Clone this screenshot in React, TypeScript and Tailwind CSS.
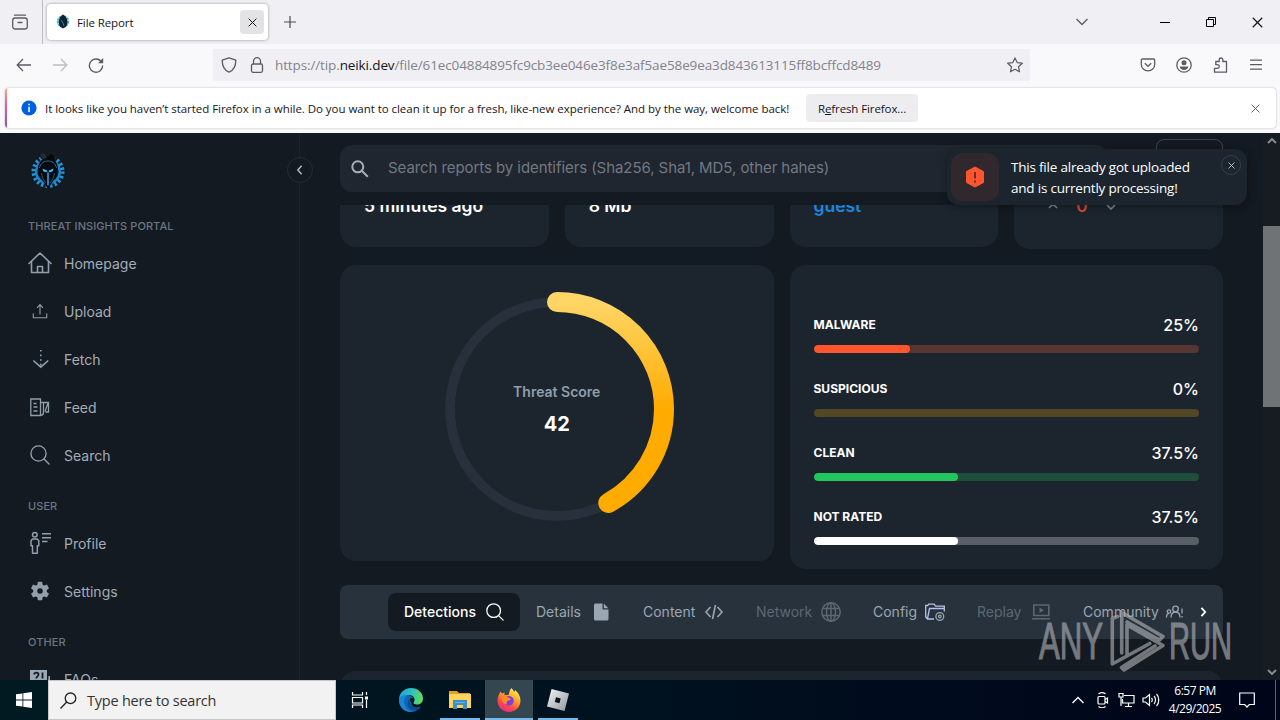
import type { ReactNode } from "react";
import clsx from "clsx";

interface IconProps {
  className?: string;
}

interface NavItem {
  label: string;
  icon: ReactNode;
}

interface Rating {
  label: string;
  value: number;
  track: string;
  bar: string;
}

interface ReportTab {
  label: string;
  width: string;
  icon: ReactNode;
  state?: "active" | "disabled";
}

const SearchIcon = ({ className }: IconProps) => (
  <svg className={className} viewBox="0 0 20 20" fill="none" stroke="currentColor" strokeWidth="1.4" strokeLinecap="round">
    <circle cx="8.5" cy="8.5" r="7.6" />
    <path d="M14 14l5 5" />
  </svg>
);

const Cross = ({ className }: IconProps) => (
  <svg className={className} viewBox="0 0 10 10" fill="none" stroke="currentColor" strokeWidth="1.1">
    <path d="M0.7 0.7l8.6 8.6M9.3 0.7l-8.6 8.6" />
  </svg>
);

const NeikiLogo = ({ className }: IconProps) => (
  <svg className={className} viewBox="0 0 36 38">
    <circle cx="18" cy="19.5" r="14.2" fill="none" stroke="#1d97e0" strokeWidth="4.6" strokeDasharray="2.3 2.16" />
    <circle cx="18" cy="19.5" r="11.8" fill="none" stroke="#1a86cc" strokeWidth="2.4" />
    <path d="M8 0h20l-3 7H11z" fill="#141a21" />
    <path d="M18 4c-6 2-10 7-10 13 0 5 2 8 4.500 11.500L18 37l5.500-8.500C26 25 28 22 28 17c0-6-4-11-10-13z" fill="#05080c" />
    <path d="M19 8l1-6 4 2 2 8z" fill="#05080c" />
    <path d="M10 3l4 4 3-1-3-5z" fill="#2a2e33" />
    <path d="M9.500 16c1-5 5-7 8.500-7s7.500 2 8.500 7" fill="none" stroke="#2b6f92" strokeWidth="1" />
    <path d="M12.500 16.500l5 2.300-1.200 1.800-3-1.300zM23.500 16.500l-5 2.300 1.200 1.800 3-1.300z" fill="#38c2fa" />
    <path d="M17.200 20.500h1.600v12l-.8 1.500-.8-1.500z" fill="#2aa6ea" />
    <path d="M11.500 21c.500 4 2 7 4.500 10M24.500 21c-.500 4-2 7-4.500 10" fill="none" stroke="#1f5f86" strokeWidth="1" />
  </svg>
);

const mainNav: NavItem[] = [
  {
    label: "Homepage",
    icon: (
      <svg viewBox="0 0 24 24" className="size-6" fill="none" stroke="currentColor" strokeWidth="1.6" strokeLinejoin="round" strokeLinecap="round">
        <path d="M1 12.5L12 2l11 10.500" />
        <path d="M3.5 10.5V21.500h17V10.5" />
        <path d="M9.5 21.5v-6h5v6" />
      </svg>
    ),
  },
  {
    label: "Upload",
    icon: (
      <svg viewBox="0 0 24 24" className="size-6" fill="none" stroke="currentColor" strokeWidth="1.1">
        <path d="M5.3 14.5v4.2h13.4v-4.2M12 15.5V5.8M9 8.8l3-3.2 3 3.2" />
      </svg>
    ),
  },
  {
    label: "Fetch",
    icon: (
      <svg viewBox="0 0 24 24" className="size-6" fill="none" stroke="currentColor" strokeWidth="1.6">
        <path d="M5.300 13.500l7.500 6.700 7.500-6.700" />
        <path d="M12.800 3v17" strokeDasharray="1.6 3" />
      </svg>
    ),
  },
  {
    label: "Feed",
    icon: (
      <svg viewBox="0 0 24 24" className="size-6" fill="none" stroke="currentColor" strokeWidth="1.3">
        <path d="M2.800 4h9.700v16.500H2.800zM12.500 20.500c2 0 3-1 3-3.200V8M12.500 7.500h8v9.500h-3M20 8l-3 8.500M5.500 8.500h3M5.500 12h4M5.500 16h4" />
      </svg>
    ),
  },
  { label: "Search", icon: <SearchIcon className="ml-[2px] size-5" /> },
];

const userNav: NavItem[] = [
  {
    label: "Profile",
    icon: (
      <svg viewBox="0 0 24 24" className="size-6" fill="none" stroke="currentColor" strokeWidth="1.5">
        <circle cx="6.800" cy="3.700" r="2.300" />
        <path d="M4.500 8h4.600l1.700 1.700v5.100H9.300v7.500H4.500v-7.500H3V9.700z" strokeLinejoin="round" />
        <path d="M14 2.800h9M14 6.700h9M14 10.500h5.500" />
      </svg>
    ),
  },
  {
    label: "Settings",
    icon: (
      <svg viewBox="0 0 24 24" className="ml-px size-[22px]" fill="currentColor">
        <path d="M19.430 12.980c.040-.320.070-.640.070-.980s-.030-.660-.070-.980l2.110-1.650c.190-.150.240-.420.120-.640l-2-3.460c-.120-.220-.390-.300-.610-.220l-2.490 1c-.520-.400-1.080-.730-1.690-.980l-.380-2.650A.488.488 0 0014 2h-4c-.250 0-.460.180-.490.420l-.380 2.650c-.610.250-1.170.590-1.690.980l-2.490-1c-.230-.090-.490 0-.610.220l-2 3.460c-.130.220-.070.490.120.640l2.110 1.650c-.040.320-.070.650-.070.980s.030.660.070.980l-2.110 1.650c-.190.150-.240.420-.120.640l2 3.460c.120.220.390.300.610.220l2.490-1c.520.400 1.080.730 1.690.980l.380 2.650c.030.240.240.420.490.420h4c.250 0 .460-.180.490-.420l.380-2.650c.610-.250 1.170-.590 1.690-.980l2.490 1c.230.090.490 0 .610-.220l2-3.460c.120-.220.070-.490-.120-.640l-2.110-1.650zM12 15a3 3 0 110-6 3 3 0 010 6z" />
      </svg>
    ),
  },
];

const otherNav: NavItem[] = [
  {
    label: "FAQs",
    icon: (
      <svg viewBox="0 0 24 24" className="size-6">
        <path d="M2 3h17v14H8l-4 4v-4H2z" fill="#9aa7b5" />
        <path d="M20.500 9h1.500v9h-2z" fill="#9aa7b5" />
        <path d="M6 7.500c.500-2.500 4.500-2.500 4.500 0 0 2-2.200 1.800-2.200 4M14.500 5.500v6" stroke="#141a21" strokeWidth="1.800" fill="none" />
      </svg>
    ),
  },
];

const ratings: Rating[] = [
  { label: "MALWARE", value: 25, track: "bg-[#573532]", bar: "bg-[#ff5630]" },
  { label: "SUSPICIOUS", value: 0, track: "bg-[#524724]", bar: "bg-[#ffab00]" },
  { label: "CLEAN", value: 37.5, track: "bg-[#1f4f3a]", bar: "bg-[#22c55e]" },
  { label: "NOT RATED", value: 37.5, track: "bg-[#595f65]", bar: "bg-white" },
];

const reportTabs: ReportTab[] = [
  { label: "Detections", width: "w-[132px]", state: "active", icon: <SearchIcon className="size-[18px]" /> },
  {
    label: "Details",
    width: "w-[107px]",
    icon: (
      <svg viewBox="0 0 20 20" className="size-5" fill="currentColor">
        <path d="M4.500 1.500h7v5.200c0 .500.300.800.800.800h5.200v9.500c0 .800-.700 1.500-1.500 1.500H4.500c-.800 0-1.500-.700-1.500-1.500V3c0-.800.700-1.500 1.500-1.500zM12.800 1.500l4.500 4.700h-4.500z" />
      </svg>
    ),
  },
  {
    label: "Content",
    width: "w-[113px]",
    icon: (
      <svg viewBox="0 0 20 20" className="size-5" fill="none" stroke="currentColor" strokeWidth="1.600">
        <path d="M6.500 5L2 10l4.500 5M13.500 5l4.500 5-4.500 5M11.500 3l-3 14" />
      </svg>
    ),
  },
  {
    label: "Network",
    width: "w-[117px]",
    state: "disabled",
    icon: (
      <svg viewBox="0 0 20 20" className="size-5" fill="none" stroke="currentColor" strokeWidth="1.500">
        <circle cx="10" cy="10" r="9.200" />
        <ellipse cx="10" cy="10" rx="4.500" ry="9.200" />
        <path d="M10 1v18M1.500 6.500h17M1.500 13.500h17" />
      </svg>
    ),
  },
  {
    label: "Config",
    width: "w-[104px]",
    icon: (
      <svg viewBox="0 0 20 20" className="size-5" fill="none" strokeWidth="1.300">
        <path d="M9 17H2.500L.700 15V3.500h2l1-1.300h5.500l1.300 2h8.800v2.300H4.500L2.500 16.500M19.300 6.500v3" stroke="#b6c0e6" />
        <circle cx="14.800" cy="14.500" r="3.900" stroke="currentColor" />
        <circle cx="14.800" cy="14.500" r="1.300" stroke="currentColor" />
      </svg>
    ),
  },
  {
    label: "Replay",
    width: "w-[106px]",
    state: "disabled",
    icon: (
      <svg viewBox="0 0 20 20" className="size-5" fill="none" stroke="currentColor" strokeWidth="1.600">
        <path d="M2.800 3h15v10.500h-15zM1 16.800h18" />
        <path d="M8.500 5.500l4.500 2.800-4.500 2.800z" fill="currentColor" stroke="none" />
      </svg>
    ),
  },
  {
    label: "Community",
    width: "w-[133px]",
    icon: (
      <svg viewBox="0 0 20 20" className="size-5" fill="none" stroke="currentColor" strokeWidth="1.300">
        <circle cx="11.500" cy="7" r="2.800" />
        <path d="M7 15.500c0-3.500 2-5.500 4.500-5.500s4.500 2 4.500 5.500" />
        <circle cx="5" cy="9.500" r="1.700" />
        <path d="M2.500 15.500c0-2.500 1-3.800 2.500-3.800M18 6.500v5M18 14v1.500" />
      </svg>
    ),
  },
];

function BrowserChrome() {
  return (
    <div className="flex h-[133px] shrink-0 flex-col bg-[#f9f9fb] font-['Open_Sans',sans-serif] text-[12px] text-[#15141a]">
      {/* Tab strip */}
      <div className="flex h-11 shrink-0 items-center bg-[#f0f0f4]">
        <div className="flex h-11 w-[43px] items-center border-r border-[#bdbcc2] pl-3">
          <svg viewBox="0 0 16 16" className="size-4" fill="none" stroke="#5b5b66" strokeWidth="1.300">
            <rect x="0.700" y="4" width="14.600" height="11" rx="2.500" />
            <path d="M2.500 1.200h11M6 8.500h4" strokeLinecap="round" />
          </svg>
        </div>
        <div className="ml-1 flex h-9 w-[221px] items-center rounded bg-white pr-1 pl-2 shadow-[0_0_3px_rgba(0,0,0,0.4)]">
          <svg viewBox="0 0 16 16" className="size-4">
            <circle cx="8" cy="7.500" r="5" fill="none" stroke="#49b5d3" strokeWidth="2.500" strokeDasharray="2 .7" />
            <path d="M8 .500c-4 2-5.500 8-3 12l3 2 3-2c3-4 1-10-3-12z" fill="#10222d" />
            <path d="M6 6l2 3 1 3" stroke="#2980a6" fill="none" />
          </svg>
          <span className="ml-[6px] pt-px text-[11.500px] tracking-[-0.1px]">File Report</span>
          <button className="ml-auto flex size-6 items-center justify-center rounded bg-[#e3e3e6]">
            <Cross className="size-[9px]" />
          </button>
        </div>
        <svg viewBox="0 0 12 12" className="ml-4 size-3" fill="none" stroke="#4b4b55" strokeWidth="1.200">
          <path d="M6 0v12M0 6h12" />
        </svg>
        <div className="ml-auto flex items-center pr-[17px]">
          <svg viewBox="0 0 12 8" className="mr-[72px] h-2 w-3" fill="none" stroke="#5b5b66" strokeWidth="1.300">
            <path d="M.500 1l5.500 5.500L11.500 1" />
          </svg>
          <span className="mr-9 h-px w-[10px] bg-black" />
          <svg viewBox="0 0 10 10" className="mr-9 size-[10px]" fill="none" stroke="black">
            <path d="M.500 2.500h7v7h-7zM2.500 2.500v-2h7v7h-2" />
          </svg>
          <Cross className="size-[11px]" />
        </div>
      </div>

      {/* Navigation toolbar */}
      <div className="flex h-[44px] shrink-0 items-center pb-[3px] text-[#5b5b66]">
        <svg viewBox="0 0 16 16" className="ml-4 size-4" fill="none" stroke="currentColor" strokeWidth="1.300">
          <path d="M15 8H1.500M7 2L1.200 8 7 14" />
        </svg>
        <svg viewBox="0 0 16 16" className="ml-5 size-4" fill="none" stroke="#bcbcc2" strokeWidth="1.300">
          <path d="M1 8h13.500M9 2l5.800 6L9 14" />
        </svg>
        <svg viewBox="0 0 16 16" className="ml-5 size-4" fill="none" stroke="currentColor" strokeWidth="1.400">
          <path d="M13.500 5A6.600 6.600 0 1014.600 8.500" />
          <path d="M15.200 1v5.200H10z" fill="currentColor" stroke="none" />
        </svg>
        <div className="ml-[109px] flex h-8 w-[817px] items-center bg-[#f0f0f4] pr-[7px] pl-2">
          <svg viewBox="0 0 16 16" className="size-4" fill="none" stroke="currentColor" strokeWidth="1.300" strokeLinejoin="round">
            <path d="M8 .800l6.800 2.400c0 6-2 10-6.800 12-4.800-2-6.800-6-6.800-12z" />
          </svg>
          <svg viewBox="0 0 16 16" className="ml-3 size-4" fill="none" stroke="currentColor" strokeWidth="1.300">
            <rect x="2.500" y="7" width="11" height="8.300" rx="1.500" />
            <path d="M4.500 7V4.200a3.500 3.500 0 017 0V7" />
          </svg>
          <span className="ml-[10px] pt-px text-[13.500px] tracking-[-0.12px] whitespace-nowrap text-[#84838b]">
            https://tip.<span className="text-[#15141a]">neiki.dev</span>
            /file/61ec04884895fc9cb3ee046e3f8e3af5ae58e9ea3d843613115ff8bcffcd8489
          </span>
          <svg viewBox="0 0 16 16" className="ml-auto size-4" fill="none" stroke="currentColor" strokeWidth="1.200" strokeLinejoin="round">
            <path d="M8 .900l2.200 4.700 5.100.600-3.800 3.500 1 5.100L8 12.300l-4.500 2.500 1-5.100L.700 6.200l5.100-.600z" />
          </svg>
        </div>
        <div className="ml-auto flex items-center gap-5 pr-4">
          <svg viewBox="0 0 16 16" className="size-4" fill="none" stroke="currentColor" strokeWidth="1.300">
            <path d="M2.500 2h11c.700 0 1.200.500 1.200 1.200v4a6.700 6.700 0 01-13.400 0v-4C1.300 2.500 1.800 2 2.500 2z" />
            <path d="M4.800 6.300L8 9.300l3.200-3" />
          </svg>
          <svg viewBox="0 0 16 16" className="size-4">
            <circle cx="8" cy="8" r="7.200" fill="none" stroke="currentColor" strokeWidth="1.300" />
            <circle cx="8" cy="5.800" r="2.500" fill="currentColor" />
            <path d="M3.800 9.500h8.400c0 2-1.900 3.500-4.200 3.500s-4.200-1.500-4.200-3.500z" fill="currentColor" />
          </svg>
          <svg viewBox="0 0 16 16" className="size-4" fill="none" stroke="currentColor" strokeWidth="1.300">
            <path d="M2.500 15.200h12V4.500h-3.700V2.800a1.800 1.800 0 00-3.600 0v1.700H3.800v3.200h1.700a1.700 1.700 0 010 3.600H2.500z" strokeLinejoin="round" />
          </svg>
          <svg viewBox="0 0 16 16" className="size-4" fill="none" stroke="currentColor" strokeWidth="1.300">
            <path d="M2 3.200h12M2 7.700h12M2 12.200h12" />
          </svg>
        </div>
      </div>

      {/* Refresh notification */}
      <div className="mr-1 ml-[5px] flex h-10 items-center overflow-hidden rounded bg-white pr-4 shadow-[0_0_2px_rgba(0,0,0,0.3)]">
        <span className="h-full w-[2px] bg-linear-to-b from-[#ffa06a] via-[#e0559a] to-[#8651c4]" />
        <svg viewBox="0 0 16 16" className="ml-[14px] size-4">
          <circle cx="8" cy="8" r="7.600" fill="#0060df" />
          <path d="M7.300 3.800h1.500v1.500H7.300zM7.300 6.800h1.500v5.200H7.300z" fill="white" />
        </svg>
        <span className="ml-2 w-[761px] pt-[2px] text-[11.500px] tracking-[-0.04px] whitespace-nowrap">
          It looks like you haven’t started Firefox in a while. Do you want to clean it up for a fresh, like-new experience? And by the
          way, welcome back!
        </span>
        <button className="h-7 w-[112px] rounded bg-[#ededf0] pt-[2px] text-[11.500px] tracking-[-0.1px]">
          R<span className="underline">e</span>fresh Firefox...
        </button>
        <Cross className="ml-auto size-[9px] text-[#5b5b66]" />
      </div>
    </div>
  );
}

const NavGroup = ({ title, items }: { title: string; items: NavItem[] }) => (
  <div>
    <h2 className="h-10 pt-[17px] text-[11px] leading-5 font-medium tracking-[0.07px] whitespace-nowrap text-[#697683]">{title}</h2>
    {items.map((item) => (
      <a key={item.label} className="flex h-12 items-center gap-3 text-[14px] text-[#a3adb8]">
        <span className="flex size-6 items-center text-[#919eab]">{item.icon}</span>
        <span className="pt-px">{item.label}</span>
      </a>
    ))}
  </div>
);

function Sidebar() {
  return (
    <aside className="relative h-full w-[300px] shrink-0 border-r border-[#1c232b] px-7">
      <div className="h-[66px] pt-[19px] pl-[2px]">
        <NeikiLogo className="h-[38px] w-9" />
      </div>
      <NavGroup title="THREAT INSIGHTS PORTAL" items={mainNav} />
      <NavGroup title="USER" items={userNav} />
      <NavGroup title="OTHER" items={otherNav} />
      <button className="absolute top-6 -right-[14px] z-10 flex size-[26px] items-center justify-center rounded-full border border-[#262e37] bg-[#141a21]">
        <svg viewBox="0 0 8 12" className="mr-px h-[10px] w-[7px]" fill="none" stroke="#b4bdc6" strokeWidth="1.700">
          <path d="M6.500 1L2 6l4.500 5" />
        </svg>
      </button>
    </aside>
  );
}

function ScoreGauge({ score }: { score: number }) {
  const radius = 107;
  const length = 2 * Math.PI * radius;

  return (
    <div className="relative h-[296px] rounded-2xl bg-[#1c252e]">
      <svg viewBox="0 0 434 296" className="h-[296px] w-[434px]" fill="none">
        <defs>
          {/* The ring is rotated, so the gradient runs right to left here */}
          <linearGradient id="scoreFill" gradientUnits="userSpaceOnUse" x1="324" y1="0" x2="217" y2="0">
            <stop offset="0" stopColor="#ffd666" />
            <stop offset="1" stopColor="#ffab00" />
          </linearGradient>
        </defs>
        <circle cx="217" cy="144" r={radius} stroke="#28303c" strokeWidth="9.700" />
        <circle
          cx="217"
          cy="144"
          r={radius}
          stroke="url(#scoreFill)"
          strokeWidth="20"
          strokeLinecap="round"
          strokeDasharray={`${(length * score) / 100} ${length}`}
          transform="rotate(-90 217 144)"
        />
      </svg>
      <div className="absolute inset-x-0 top-[117px] flex flex-col items-center">
        <span className="text-[14px] leading-5 font-semibold text-[#919eab]">Threat Score</span>
        <span className="mt-2 text-[20px] leading-7 font-bold text-white">{score}</span>
      </div>
    </div>
  );
}

const RatingRow = ({ rating }: { rating: Rating }) => (
  <div>
    <div className="flex h-6 items-center justify-between text-white">
      <span className="text-[12px] font-bold">{rating.label}</span>
      <span className="text-[16px] font-medium">{rating.value}%</span>
    </div>
    <div className={clsx("mt-2 h-2 overflow-hidden rounded-full", rating.track)}>
      <div className={clsx("h-2 rounded-full", rating.bar)} style={{ width: `${rating.value}%` }} />
    </div>
  </div>
);

function Toast() {
  return (
    <div className="absolute top-4 left-[947px] z-20 flex h-14 w-[300px] items-center rounded-xl bg-[#1c252e] pl-1 shadow-[0_2px_10px_rgba(0,0,0,0.35)]">
      <div className="flex size-12 items-center justify-center rounded-xl bg-[#30282d]">
        <svg viewBox="0 0 20 22" className="h-[22px] w-5">
          <path d="M10 1l8.500 4.500v11L10 21l-8.500-4.500v-11z" fill="#ff5630" stroke="#ff5630" strokeLinejoin="round" />
          <path d="M10 6v6.500M10 14.500v2" stroke="#4a2526" strokeWidth="1.600" />
        </svg>
      </div>
      <p className="ml-3 pt-[2px] font-['Open_Sans',sans-serif] text-[13.500px] leading-[21px] tracking-[-0.21px] whitespace-nowrap text-white">
        This file already got uploaded
        <br />
        and is currently processing!
      </p>
      <button className="absolute top-[6px] right-[6px] flex size-5 items-center justify-center rounded-full border border-[#36404a]">
        <Cross className="size-[7px] text-[#dfe3e8]" />
      </button>
    </div>
  );
}

function ReportPage() {
  return (
    <main className="h-full w-[963px] shrink-0 px-10">
      <header className="flex h-[72px] justify-between pt-[6px]">
        <div className="mt-[6px] flex h-[47px] w-[768px] items-center rounded-xl bg-[#20262f] pl-[11px]">
          <svg viewBox="0 0 18 18" className="size-[18px]" fill="none" stroke="#a5afb9" strokeWidth="2">
            <circle cx="6.800" cy="6.800" r="5.500" />
            <path d="M10.800 10.800l6 6" />
          </svg>
          <span className="ml-[19px] text-[15px] tracking-[-0.07px] text-[#717983]">
            Search reports by identifiers (Sha256, Sha1, MD5, other hahes)
          </span>
        </div>
        <div className="h-10 w-[67px] rounded-lg border border-[#3a444e]" />
      </header>

      <div className="h-[475px] overflow-hidden">
        <div className="-mt-[60px] grid grid-cols-4 items-start gap-4 text-[17.500px] font-semibold text-white">
          <div className="h-[102px] rounded-2xl bg-[#1c252e] px-6 pt-12">5 minutes ago</div>
          <div className="h-[102px] rounded-2xl bg-[#1c252e] px-6 pt-12">8 Mb</div>
          <div className="h-[102px] rounded-2xl bg-[#1c252e] px-6 pt-12 text-[#1f86dd]">guest</div>
          <div className="flex h-[104px] items-start gap-[18px] rounded-2xl bg-[#1c252e] pt-12 pl-[34px]">
            <svg viewBox="0 0 10 6" className="mt-[10px] h-[6px] w-[10px]" fill="none" stroke="#7b8690" strokeWidth="1.700">
              <path d="M1 5l4-4 4 4" />
            </svg>
            <span className="font-medium text-[#e64c3c]">0</span>
            <svg viewBox="0 0 10 6" className="mt-[11px] h-[6px] w-[10px]" fill="none" stroke="#7b8690" strokeWidth="1.700">
              <path d="M1 1l4 4 4-4" />
            </svg>
          </div>
        </div>

        <div className="mt-4 grid grid-cols-2 items-start gap-4">
          <ScoreGauge score={42} />
          <div className="flex h-[304px] flex-col gap-6 rounded-2xl bg-[#1c252e] px-6 pt-12">
            {ratings.map((rating) => (
              <RatingRow key={rating.label} rating={rating} />
            ))}
          </div>
        </div>

        <div className="mt-4 flex h-[54px] items-center rounded-lg bg-[#28323d] pl-12">
          {reportTabs.map((tab) => (
            <div
              key={tab.label}
              className={clsx(
                "flex h-[38px] shrink-0 items-center justify-between rounded-lg px-4 text-[14px]",
                tab.width,
                tab.state === "active" && "bg-[#141a21] font-medium text-white",
                tab.state === "disabled" && "text-[#5c6772]",
                !tab.state && "text-[#9aa6b2]",
              )}
            >
              <span className="pb-px">{tab.label}</span>
              {tab.icon}
            </div>
          ))}
          <svg viewBox="0 0 8 12" className="h-[10px] w-[7px] shrink-0" fill="none" stroke="white" strokeWidth="2.200">
            <path d="M1.500 1L6 6l-4.500 5" />
          </svg>
        </div>

        <div className="mt-8 h-10 rounded-2xl bg-[#1c252e]" />
      </div>
    </main>
  );
}

const Scrollbar = () => (
  <div className="flex h-full w-[17px] shrink-0 flex-col items-center bg-[#171c23] text-[#858a8f]">
    <svg viewBox="0 0 10 6" className="mt-[5px] h-[6px] w-[10px]" fill="none" stroke="currentColor" strokeWidth="2">
      <path d="M1 5l4-4 4 4" />
    </svg>
    <div className="mt-[82px] h-[181px] w-full bg-[#707375]" />
    <svg viewBox="0 0 10 6" className="mt-auto mb-[5px] h-[6px] w-[10px]" fill="none" stroke="currentColor" strokeWidth="2">
      <path d="M1 1l4 4 4-4" />
    </svg>
  </div>
);

const Watermark = () => (
  <svg viewBox="0 0 196 66" className="absolute top-[607px] left-[1037px] z-30 h-[66px] w-[196px] opacity-60" fill="#b4b7bb">
    <g fontFamily="'Liberation Sans Narrow','Liberation Sans',sans-serif" fontSize="52" stroke="#b4b7bb" strokeWidth="1.200">
      <text x="2" y="52" textLength="64" lengthAdjust="spacingAndGlyphs">
        ANY
      </text>
      <text x="132" y="52" textLength="63" lengthAdjust="spacingAndGlyphs">
        RUN
      </text>
    </g>
    <path
      d="M80.500 9.500l-5.200 2V57l37.500-20.500M84.700 46V5.500L126 29.500l-3.500 3.500L90 15M90 48V18M90 18l36 20.500L87 63l-2.500-2.500L118 39"
      fill="none"
      stroke="#b4b7bb"
      strokeWidth="3.600"
      strokeLinecap="round"
      strokeLinejoin="round"
    />
  </svg>
);

function Taskbar() {
  return (
    <footer className="flex h-10 shrink-0 items-center bg-linear-to-r from-[#001a22] via-[#00111f] to-[#000519] font-['Open_Sans',sans-serif] text-white">
      <div className="flex w-12 justify-center">
        <svg viewBox="0 0 16 16" className="size-4" fill="white">
          <path d="M0 2.300l6.500-.900v6.200H0zM7.300 1.300L16 0v7.600H7.300zM0 8.400h6.500v6.200L0 13.700zM7.300 8.400H16V16l-8.700-1.200z" />
        </svg>
      </div>
      <div className="flex h-10 w-[288px] items-center border border-[#c8c8c8] bg-[#f2f2f2] pl-[11px] text-[#333]">
        <svg viewBox="0 0 17 17" className="size-[17px]" fill="none" stroke="#222" strokeWidth="1.300">
          <circle cx="10.500" cy="6.300" r="5.300" />
          <path d="M6.700 10L.500 16.500" />
        </svg>
        <span className="ml-[10px] pt-[2px] text-[14.500px] tracking-[-0.22px]">Type here to search</span>
      </div>

      <div className="flex w-12 justify-center">
        <svg viewBox="0 0 18 18" className="size-[18px]" fill="none" stroke="white" strokeWidth="1.200">
          <path d="M1.500 1v3h10V1M1.500 6.500h10v5.500h-10zM1.500 17v-3h10v3M15.500 1v3M15.500 9v8" />
          <path d="M14 5.500h3v3h-3z" fill="white" stroke="none" />
        </svg>
      </div>
      <div className="ml-[3px] flex w-12 justify-center">
        <svg viewBox="0 0 24 24" className="size-6">
          <defs>
            <linearGradient id="edgeTop" x1="0" x2="1" y1="0.300" y2="0.500">
              <stop offset="0" stopColor="#1ba4e4" />
              <stop offset="0.550" stopColor="#2fc4b4" />
              <stop offset="1" stopColor="#63dc5a" />
            </linearGradient>
          </defs>
          <path d="M0 12a12 12 0 0022 6.500c-2 1-4 1.200-6 .700-3-1-4-3-4-6l2-4L6 5z" fill="#0f68b4" />
          <path d="M0 12C0 5 5 0 12 0s12 5 12 10.500c0 4-3 6-6 6-2.500 0-4-1-3.500-2s1-1.500 1-3c0-2.500-2.500-4.500-6-4.500C5 7 1 9 0 12z" fill="url(#edgeTop)" />
          <path d="M0 12c1-4 5-5 8.500-5C6 8.500 4.500 12 5.500 16c1 4 4 7 7.500 8C5 24.500 0 19 0 12z" fill="#1b86d9" />
          <path d="M11.500 10c-1.500 3-.500 8 4 9.300 2.500.700 5 .200 6.500-.800-3 5-9 5-12 1.500-2.500-3-1.500-8 1.500-10z" fill="#0b4c91" />
          <path d="M11.800 9.800c2 0 3.500 1 3.300 3-.300 1-1 1.400-.600 2.400-1.500-.500-3-1-3.300-2.500-.200-1 0-2 .600-2.900z" fill="#03141e" />
        </svg>
      </div>
      <div className="relative ml-px flex h-10 w-12 items-center justify-center">
        <svg viewBox="0 0 22 20" className="h-5 w-[22px]">
          <path d="M0 1h8l2 2h11v4H0z" fill="#e59e1f" />
          <path d="M0 4h22v14H0z" fill="#ffd45e" />
          <path d="M4 10h14v9h-4v-4H8v4H4z" fill="#3a8fc9" />
          <path d="M6 12h10v1H6z" fill="#62b2e4" />
        </svg>
        <span className="absolute inset-x-1 bottom-0 h-[2px] bg-[#76b9ed]" />
      </div>
      <div className="relative ml-px flex h-10 w-12 items-center justify-center bg-[#344650]">
        <svg viewBox="0 0 24 24" className="size-6">
          <defs>
            <linearGradient id="fox" x1="0.800" x2="0.250" y1="0.050" y2="1">
              <stop offset="0" stopColor="#fff24a" />
              <stop offset="0.400" stopColor="#ff9a2b" />
              <stop offset="0.700" stopColor="#ff4a47" />
              <stop offset="1" stopColor="#e3268f" />
            </linearGradient>
          </defs>
          <path d="M14.500 0c1 1 2 3 3 4l.500-2c3 2.500 5.500 6 5.500 10.500C23.500 19 18.500 24 12 24S.500 19 .500 12.500C.500 9 2 6 3.500 3.500L5 5.500l2.500-1V7h4c1-3 1-5 3-7z" fill="url(#fox)" />
          <circle cx="12" cy="12.800" r="4.800" fill="#7b3fe0" />
          <path d="M4.500 8c3-1 5 0 6.500 1.500 2 .500 3 1 2.500 2-1 1-3 1-3.500 2-1 1.500 0 2.500-1 3-3-1-5-4-4.500-8.500z" fill="#ff8a22" />
        </svg>
        <span className="absolute inset-x-0 bottom-0 h-[2px] bg-[#76b9ed]" />
      </div>
      <div className="relative ml-px flex h-10 w-12 items-center justify-center">
        <svg viewBox="0 0 22 22" className="size-[22px]">
          <defs>
            <linearGradient id="tile" x1="0" x2="1" y1="0" y2="1">
              <stop offset="0" stopColor="#f5f6f7" />
              <stop offset="1" stopColor="#8e959c" />
            </linearGradient>
          </defs>
          <path d="M4.500 0L22 4.500 17.500 22 0 17.500z" fill="url(#tile)" />
          <path d="M9 8.300l4.700 1.200-1.200 4.700-4.700-1.200z" fill="#03141e" />
        </svg>
        <span className="absolute inset-x-1 bottom-0 h-[2px] bg-[#76b9ed]" />
      </div>

      <div className="ml-auto flex items-center">
        <svg viewBox="0 0 12 8" className="h-2 w-3" fill="none" stroke="white" strokeWidth="1.300">
          <path d="M.500 7L6 1.500 11.500 7" />
        </svg>
        <svg viewBox="0 0 16 16" className="ml-[10px] size-4" fill="none" stroke="white" strokeWidth="1.200">
          <rect x="4" y="4.500" width="7" height="7.500" rx="1" />
          <path d="M11 7.500l2.500-1.500v5L11 9.500M4.500 2c2-1.500 5-1.500 7 0M4.500 14.500c2 1.500 5 1.500 7 0" />
        </svg>
        <svg viewBox="0 0 17 16" className="ml-2 h-4 w-[17px]" fill="none" stroke="white" strokeWidth="1.200">
          <path d="M6 3.500h10V11H4.500V7M10.500 11v3M7 14.500h7M1 1.500h4V5H1zM3 5v9" />
        </svg>
        <svg viewBox="0 0 18 16" className="ml-[7px] h-4 w-[18px]" fill="none" stroke="white" strokeWidth="1.200">
          <path d="M1 6h2.500L7.500 2.500v11L3.500 10H1zM9.500 6c1 1 1 3 0 4M12 4c2 2 2 6 0 8M14.500 2c3 3 3 9 0 12" />
        </svg>
        <div className="ml-2 w-[54px] text-center text-[12px] leading-[18px] tracking-[-0.5px] whitespace-nowrap">
          <div>6:57 PM</div>
          <div>4/29/2025</div>
        </div>
        <svg viewBox="0 0 16 16" className="ml-[17px] size-4" fill="none" stroke="white" strokeWidth="1.200">
          <path d="M.700 1h14.600v11.500h-5L8 15l-2.300-2.500h-5z" />
        </svg>
        <span className="mr-1 ml-5 h-10 w-px bg-[#5b6370]" />
      </div>
    </footer>
  );
}

export default function App() {
  return (
    <div className="relative flex h-[720px] w-[1280px] flex-col overflow-hidden">
      <BrowserChrome />
      <div className="relative flex h-[547px] shrink-0 overflow-hidden bg-[#141a21] font-[Inter,sans-serif]">
        <Sidebar />
        <ReportPage />
        <Scrollbar />
        <Toast />
      </div>
      <Taskbar />
      <Watermark />
    </div>
  );
}
